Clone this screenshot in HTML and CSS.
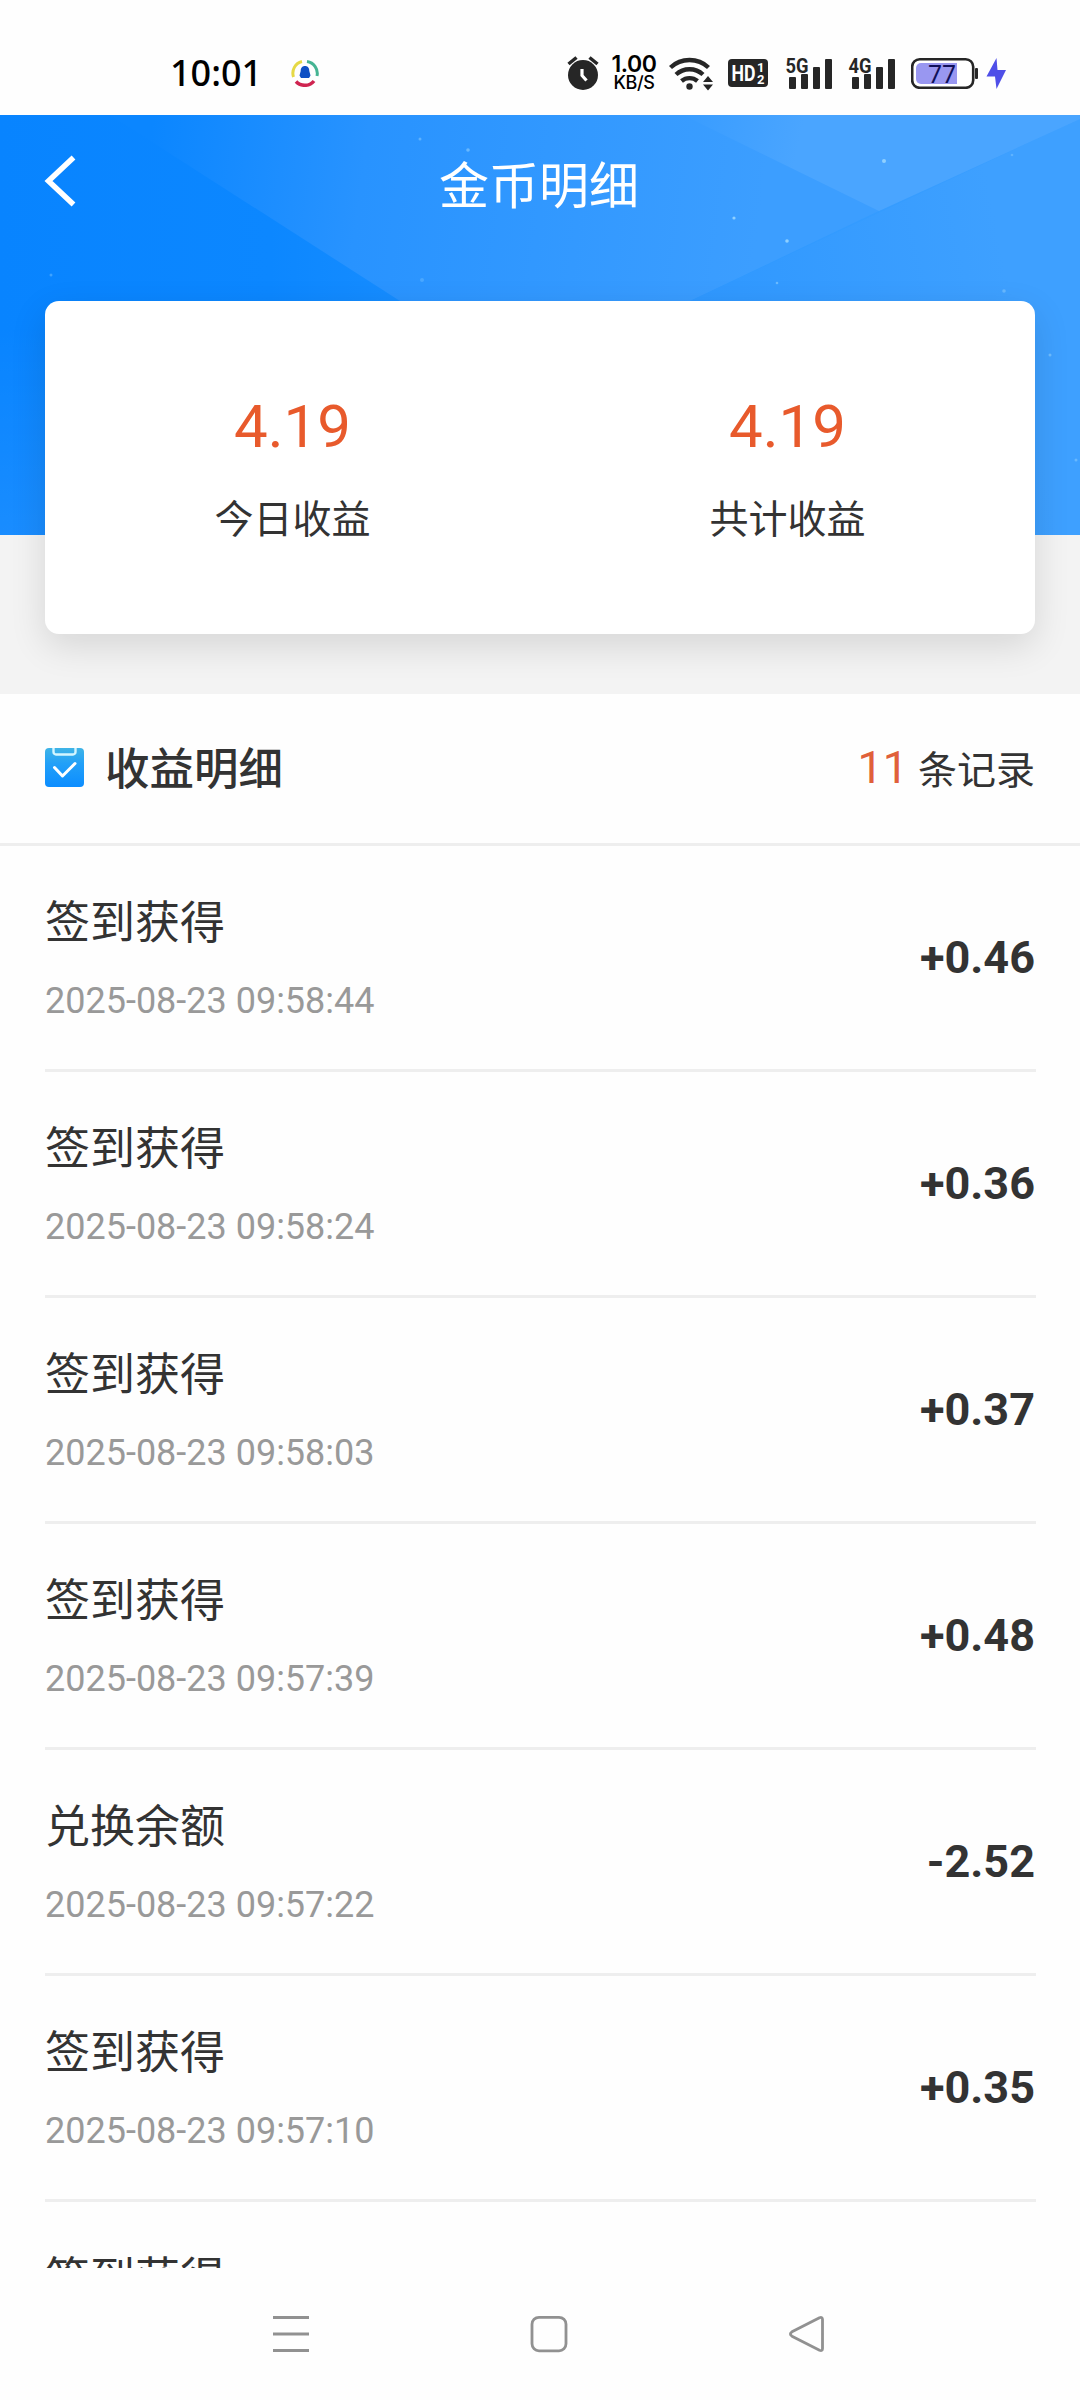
FILE: index.html
```html
<!DOCTYPE html>
<html lang="zh-CN">
<head>
<meta charset="utf-8">
<title>金币明细</title>
<link rel="stylesheet" href="styles.css">
</head>
<body>
<div class="status">
  <span class="clock">10:01</span>
  <svg class="app-dot" viewBox="291 59 28 28" width="28" height="28" fill="none" stroke-width="3">
    <path d="M293.500 77A12 12 0 0 1 302 61.500" stroke="#e6d945"/>
    <path d="M307 61.500A12 12 0 0 1 317 76" stroke="#45b493"/>
    <path d="M296 81.500A12 12 0 0 0 314 81" stroke="#cf2450" stroke-width="3.500"/>
    <path d="M305 66c-3 0-4.300 2.200-4.300 5l-1.200 4.500 1.500 2.500h8l1.500-2.500-1.200-4.500c0-2.800-1.300-5-4.300-5z" fill="#0d4fc4"/>
  </svg>
  <svg class="alarm" viewBox="567 53 32 38" width="32" height="38">
    <circle cx="583" cy="74" r="15" fill="#262626"/>
    <path d="M568.500 63l8-6.500M597.500 63l-8-6.500" stroke="#262626" stroke-width="3.500"/>
    <path d="M582 68v6.500l4.500 5" fill="none" stroke="#fff" stroke-width="3.200"/>
  </svg>
  <div class="speed"><span class="speed-num">1.00</span><span class="speed-unit">KB/S</span></div>
  <svg class="wifi" viewBox="668 52 48 38" width="48" height="38" fill="none" stroke="#262626" stroke-width="4.400">
    <path d="M670.500 65.500a28 28 0 0 1 38 0M676 72.500a20 20 0 0 1 27 0M681.500 79a12.500 12.500 0 0 1 16 0"/>
    <circle cx="689.500" cy="84.500" r="3.200" fill="#262626" stroke="none"/>
    <path d="M703 80l5-6 5 6zM703 82.500h10l-5 6z" fill="#262626" stroke="none"/>
  </svg>
  <svg class="hd" viewBox="728 58 40 30" width="40" height="30">
    <rect x="728" y="59" width="40" height="28" rx="4" fill="#262626"/>
    <g fill="#fff" font-family="Roboto, sans-serif" font-weight="700">
      <text x="731.500" y="81" font-size="22" textLength="24" lengthAdjust="spacingAndGlyphs">HD</text>
      <text x="757" y="72" font-size="13">1</text>
      <text x="757" y="84" font-size="13">2</text>
    </g>
  </svg>
  <svg class="signal" viewBox="786 53 48 35" width="48" height="35" fill="#262626">
    <text x="786.500" y="70.500" font-family="Roboto, sans-serif" font-weight="700" font-size="21" textLength="23" lengthAdjust="spacingAndGlyphs">5G</text>
    <rect x="790" y="75" width="7" height="12" rx="1"/><rect x="802" y="72" width="7" height="15" rx="1"/>
    <rect x="814" y="65" width="7" height="22" rx="1"/><rect x="826" y="57" width="7" height="30" rx="1"/>
  </svg>
  <svg class="signal" viewBox="786 53 48 35" width="48" height="35" fill="#262626">
    <text x="786.500" y="70.500" font-family="Roboto, sans-serif" font-weight="700" font-size="21" textLength="23" lengthAdjust="spacingAndGlyphs">4G</text>
    <rect x="790" y="75" width="7" height="12" rx="1"/><rect x="802" y="72" width="7" height="15" rx="1"/>
    <rect x="814" y="65" width="7" height="22" rx="1"/><rect x="826" y="57" width="7" height="30" rx="1"/>
  </svg>
  <svg class="battery" viewBox="912 56 68 32" width="68" height="32">
    <rect x="913.200" y="58.200" width="61" height="28.600" rx="7.500" fill="#fff" stroke="#262626" stroke-width="2.600"/>
    <path d="M922 62h36v21h-36a5 5 0 0 1-5-5V67a5 5 0 0 1 5-5z" fill="#9997f1"/>
    <rect x="976" y="67" width="3" height="11" rx="1" fill="#262626"/>
    <text x="929" y="81.500" font-family="'Noto Sans', sans-serif" font-size="24.500" fill="#10105a">77</text>
  </svg>
  <svg class="bolt" viewBox="986 56 20 32" width="20" height="32"><path d="M996.500 57l-10 18.500h8.500l1.500 12.500 9.500-19h-8.500z" fill="#4f4fe8"/></svg>
</div>

<main class="page">
  <header class="hero">
    <svg class="facets" viewBox="0 115 1080 420" width="1080" height="420">
      <defs>
        <linearGradient id="base" x1="0" x2="1"><stop offset="0" stop-color="#0884ff"/><stop offset=".25" stop-color="#0c87ff"/><stop offset=".6" stop-color="#2a97ff"/><stop offset="1" stop-color="#3ea0ff"/></linearGradient>
        <linearGradient id="mid" gradientUnits="userSpaceOnUse" x1="150" y1="140" x2="760" y2="220"><stop offset="0" stop-color="#0b86ff"/><stop offset=".35" stop-color="#2893ff"/><stop offset="1" stop-color="#3c9eff"/></linearGradient>
        <linearGradient id="low" gradientUnits="userSpaceOnUse" x1="700" y1="300" x2="1000" y2="240"><stop offset="0" stop-color="#2f98ff"/><stop offset="1" stop-color="#3ea0ff"/></linearGradient>
        <linearGradient id="tip" gradientUnits="userSpaceOnUse" x1="683" y1="115" x2="800" y2="140"><stop offset="0" stop-color="#389cff"/><stop offset="1" stop-color="#4aa5ff"/></linearGradient>
        <linearGradient id="foot" x1="0" y1="0" x2="0" y2="1"><stop offset=".5" stop-color="#fff" stop-opacity="0"/><stop offset="1" stop-color="#fff" stop-opacity=".07"/></linearGradient>
      </defs>
      <path d="M0 115h1080v420H0z" fill="url(#base)"/>
      <path d="M110 115h970L690 301H400z" fill="url(#mid)"/>
      <path d="M690 301L1080 119v416H690z" fill="url(#low)"/>
      <path d="M683 115h397v4L879 211z" fill="url(#tip)"/>
      <path d="M0 115h200v420H0z" fill="url(#foot)"/>
      <g fill="#8fd0ff">
        <circle cx="884" cy="161" r="2"/><circle cx="734" cy="218" r="1.600"/><circle cx="787" cy="241" r="1.800"/>
        <circle cx="777" cy="283" r="1.300" opacity=".6"/><circle cx="1004" cy="291" r="1.800" opacity=".5"/><circle cx="1050" cy="355" r="1.500" opacity=".6"/>
        <circle cx="468" cy="150" r="1.800" opacity=".6"/><circle cx="420" cy="139" r="1.500" opacity=".5"/><circle cx="422" cy="280" r="2" opacity=".3"/>
        <circle cx="51" cy="275" r="1.500" opacity=".4"/><circle cx="1076" cy="460" r="1.500" opacity=".5"/><circle cx="1012" cy="155" r="1.300" opacity=".4"/>
      </g>
    </svg>
    <div class="titlebar">
      <svg class="back" viewBox="0 0 32 52" width="32" height="52"><path d="M29.500 2.500L4.500 26l25 23.500" fill="none" stroke="#fff" stroke-width="5.500"/></svg>
      <h1 class="title">金币明细</h1>
    </div>
    <section class="card">
      <div class="stat"><b class="stat-num">4.19</b><span class="stat-label">今日收益</span></div>
      <div class="stat"><b class="stat-num">4.19</b><span class="stat-label">共计收益</span></div>
    </section>
  </header>

  <section class="list-head">
    <svg class="clip" viewBox="0 0 39 39" width="39" height="39">
      <defs><linearGradient id="cg" x1="0" y1="0" x2="0" y2="1"><stop offset="0" stop-color="#3fb4e6"/><stop offset=".4" stop-color="#22a0f8"/><stop offset="1" stop-color="#0c8dff"/></linearGradient></defs>
      <rect width="39" height="39" rx="4" fill="url(#cg)"/>
      <path d="M8.500 0v4a2.500 2.500 0 0 0 2.500 2.500h17a2.500 2.500 0 0 0 2.500-2.500V0" fill="none" stroke="#d4f6ff" stroke-width="2.400"/>
      <path d="M9.500 19.500l8 8.500L30 15.500" fill="none" stroke="#fff" stroke-width="3" stroke-linecap="round" stroke-linejoin="round"/>
    </svg>
    <h2 class="list-title">收益明细</h2>
    <p class="count"><span class="count-num">11</span><span>条记录</span></p>
  </section>

  <ul class="records">
    <li class="record"><div class="info"><span class="name">签到获得</span><time class="time">2025-08-23 09:58:44</time></div><span class="amount">+0.46</span></li>
    <li class="record"><div class="info"><span class="name">签到获得</span><time class="time">2025-08-23 09:58:24</time></div><span class="amount">+0.36</span></li>
    <li class="record"><div class="info"><span class="name">签到获得</span><time class="time">2025-08-23 09:58:03</time></div><span class="amount">+0.37</span></li>
    <li class="record"><div class="info"><span class="name">签到获得</span><time class="time">2025-08-23 09:57:39</time></div><span class="amount">+0.48</span></li>
    <li class="record"><div class="info"><span class="name">兑换余额</span><time class="time">2025-08-23 09:57:22</time></div><span class="amount">-2.52</span></li>
    <li class="record"><div class="info"><span class="name">签到获得</span><time class="time">2025-08-23 09:57:10</time></div><span class="amount">+0.35</span></li>
    <li class="record"><div class="info"><span class="name">签到获得</span></div></li>
  </ul>
</main>

<nav class="navbar">
  <svg viewBox="0 0 38 38" width="38" height="38"><path d="M1 2.500h36M1 19h36M1 35.500h36" /></svg>
  <svg viewBox="0 0 38 38" width="38" height="38"><rect x="2" y="2.300" width="34" height="33.500" rx="7"/></svg>
  <svg viewBox="0 0 38 38" width="38" height="38"><path d="M31.500 2.800L4 16.800q-3.200 2.200 0 4.400l27.500 14q3 1.200 3-1.800V4.600q0-3-3-1.800z"/></svg>
</nav>
</body>
</html>
```
FILE: styles.css
```css
* { box-sizing: border-box; margin: 0; padding: 0; }

body {
  width: 1080px;
  height: 2400px;
  overflow: hidden;
  display: flex;
  flex-direction: column;
  background: #fefefe;
  color: #333;
  font-family: Roboto, "Noto Sans CJK SC", sans-serif;
}

svg { display: block; flex: none; }

/* Status bar */
.status {
  height: 115px;
  padding: 30px 74px 0 170px;
  display: flex;
  align-items: center;
}
.clock {
  width: 121px;
  font: 500 36px/50px "Noto Sans", sans-serif;
  color: #000;
  white-space: nowrap;
}
.alarm { margin-left: 248px; }
.speed {
  width: 50px;
  margin-left: 10px;
  padding-top: 1px;
  display: flex;
  flex-direction: column;
  align-items: center;
  color: #000;
  font-family: Inter, sans-serif;
  white-space: nowrap;
}
.speed-num { font-size: 23px; font-weight: 600; line-height: 20px; letter-spacing: -.5px; }
.speed-unit { font-size: 18px; font-weight: 500; line-height: 18px; letter-spacing: -.4px; }
.wifi { margin-left: 9px; }
.hd { margin-left: 12px; }
.signal { margin-left: 17px; }
.signal + .signal { margin-left: 15px; }
.battery { margin-left: 15px; }
.bolt { margin-left: 7px; }

/* Scrolling page */
.page { height: 2153px; overflow: hidden; }

.hero {
  position: relative;
  height: 579px;
  background: #f3f3f3;
}
.facets { position: absolute; top: 0; left: 0; }

.titlebar {
  position: relative;
  height: 186px;
  padding: 0 44px;
  display: flex;
  align-items: flex-start;
}
.back { margin-top: 40px; }
.title {
  flex: 1;
  margin-right: 34px;
  padding-top: 36px;
  text-align: center;
  color: #fff;
  font-size: 50px;
  line-height: 72px;
  font-weight: 400;
}

.card {
  position: relative;
  height: 333px;
  margin: 0 45px;
  display: grid;
  grid-template-columns: 1fr 1fr;
  background: #fff;
  border-radius: 14px;
  box-shadow: 0 12px 36px rgba(0, 0, 0, .12);
}
.stat {
  padding-top: 91px;
  display: flex;
  flex-direction: column;
  align-items: center;
}
.stat-num { color: #e85a2c; font-size: 60px; line-height: 70px; font-weight: 400; }
.stat-label { margin-top: 29px; font-size: 39px; line-height: 58px; }

/* Section heading */
.list-head {
  height: 152px;
  padding: 0 45px;
  display: flex;
  align-items: center;
  border-bottom: 3px solid #eee;
}
.clip { margin-top: -3px; }
.list-title { margin: 3px 0 0 21px; font-size: 44.500px; line-height: 66px; font-weight: 500; }
.count {
  margin: 3px 0 0 auto;
  display: flex;
  align-items: baseline;
  gap: 10px;
  font-size: 39px;
  line-height: 66px;
}
.count-num { position: relative; top: -1px; color: #e0603a; font-size: 45px; }

/* Records */
.records { list-style: none; padding: 0 44px 0 45px; }
.record {
  height: 226px;
  padding-right: 1px;
  display: flex;
  align-items: center;
  justify-content: space-between;
  border-bottom: 3px solid #eee;
}
.info { height: 223px; padding-top: 45px; display: flex; flex-direction: column; }
.name { font-size: 45px; line-height: 66px; }
.time { margin-top: 22px; font-size: 36px; line-height: 44px; color: #999; }
.amount { font-size: 45px; line-height: 54px; font-weight: 700; }

/* Navigation bar */
.navbar {
  height: 132px;
  padding: 0 254px 0 272px;
  display: flex;
  align-items: center;
  justify-content: space-between;
  fill: none;
  stroke: #919191;
  stroke-width: 2.8px;
}
```
